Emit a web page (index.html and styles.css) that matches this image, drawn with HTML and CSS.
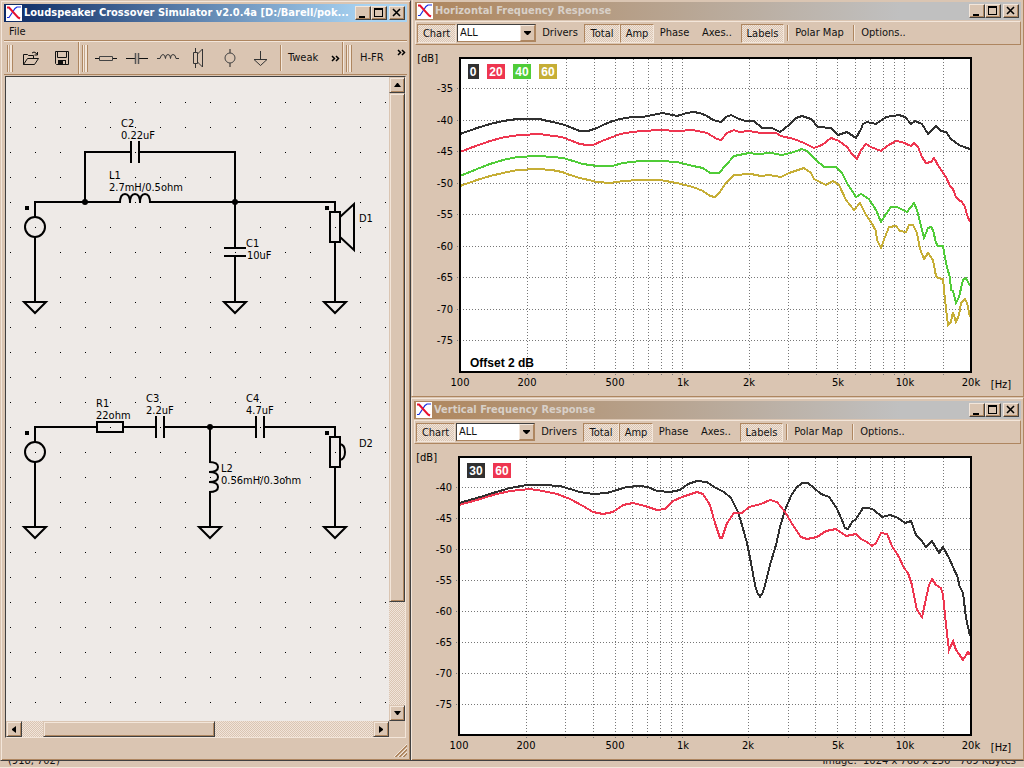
FILE: index.html
```html
<!doctype html>
<html lang="en">
<head>
    <meta charset="UTF-8">
    <title>Loudspeaker Crossover Simulator</title>
    <link rel="stylesheet" href="styles.css">
</head>
<body>
<!-- shared icons -->
<svg class="defs" width="0" height="0">
    <symbol id="logo" viewBox="0 0 16 16">
        <rect width="16" height="16" fill="#fff"/>
        <path d="M1 12.500H3L9 3.500L11 2H15" fill="none" stroke="#1a2fe0" stroke-width="1.200"/>
        <path d="M1 2.500H3L12 12.500L14 13.500" fill="none" stroke="#e8102e" stroke-width="2"/>
    </symbol>
    <symbol id="min" viewBox="0 0 12 10"><path d="M3 8h6v2H3z"/></symbol>
    <symbol id="max" viewBox="0 0 12 10"><path d="M2 0h9v9H2zM3 2v6h7V2z" fill-rule="evenodd"/></symbol>
    <symbol id="close" viewBox="0 0 12 10"><path d="M3 1l7 7M10 1L3 8" stroke="#000" stroke-width="1.600"/></symbol>
    <symbol id="more" viewBox="0 0 9 7"><path d="M1 1l2.500 2.500L1 6M5 1l2.500 2.500L5 6" fill="none" stroke="#000" stroke-width="1.500"/></symbol>
</svg>

<main class="desktop">
    <section class="window main-window">
        <header class="titlebar active">
            <svg class="logo"><use href="#logo"/></svg>
            <h1>Loudspeaker Crossover Simulator v2.0.4a [D:/Barell/pok...</h1>
            <button class="cap" aria-label="Minimize"><svg><use href="#min"/></svg></button>
            <button class="cap" aria-label="Maximize"><svg><use href="#max"/></svg></button>
            <button class="cap close" aria-label="Close"><svg><use href="#close"/></svg></button>
        </header>
        <nav class="menu"><button>File</button></nav>
        <div class="parts">
            <div class="group files">
                <i class="handle"></i>
                <button class="icon" aria-label="Open">
                    <svg viewBox="0 0 16 14"><path d="M.5 13.500V3.500h4l1 1h5v3M.5 13.500l4-6h11l-4 6zM9 2q2-2 4 0l1 1.500M14.500 1v3h-3" fill="none" stroke="#111"/></svg>
                </button>
                <button class="icon" aria-label="Save">
                    <svg viewBox="0 0 16 14"><path d="M1.500.5h13v13h-12l-1-1zM3.500.5v6h9v-6" fill="none" stroke="#111"/><path d="M4 9h8v5H4z" fill="#111"/><path d="M9 10h2v3H9z" fill="#dac5b2"/></svg>
                </button>
            </div>
            <div class="group symbols">
                <i class="handle"></i>
                <button class="icon" aria-label="Resistor">
                    <svg viewBox="0 0 22 20"><path d="M0 10.500h5M18 10.500h4" stroke="#111"/><path d="M4.500 8.500h13v4h-13z" fill="none" stroke="#444"/></svg>
                </button>
                <button class="icon" aria-label="Capacitor">
                    <svg viewBox="0 0 22 20"><path d="M0 10.500h9M13 10.500h9" stroke="#111"/><path d="M9.500 5v11M12.500 5v11" stroke="#555" stroke-width="1.500"/></svg>
                </button>
                <button class="icon" aria-label="Inductor">
                    <svg viewBox="0 0 22 20"><path d="M0 10.500h3q1-4 3-4t2.500 4q0-4 2.500-4t2.500 4q0-4 2.500-4t3 4h3" fill="none" stroke="#333"/></svg>
                </button>
                <button class="icon" aria-label="Driver">
                    <svg viewBox="0 0 22 20"><path d="M7.500 0v4M7.500 16v4M5.500 4.500h4v11h-4zM9.500 6l5-5v18l-5-5" fill="none" stroke="#333"/></svg>
                </button>
                <button class="icon" aria-label="Source">
                    <svg viewBox="0 0 22 20"><path d="M11 1v4M11 15v4" stroke="#222"/><circle cx="11" cy="10" r="5" fill="none" stroke="#444"/></svg>
                </button>
                <button class="icon" aria-label="Ground">
                    <svg viewBox="0 0 22 20"><path d="M10.500 3v9M4 11.500h13l-6.500 6-6.500-6" fill="none" stroke="#333"/></svg>
                </button>
                <i class="sep"></i>
                <button class="word">Tweak</button>
                <svg class="more"><use href="#more"/></svg>
            </div>
            <div class="group last">
                <i class="handle"></i>
                <button class="word">H-FR</button>
                <svg class="more up"><use href="#more"/></svg>
            </div>
        </div>

        <div class="sheet">
            <svg class="schematic" viewBox="6 77 383 645" preserveAspectRatio="xMinYMin slice">
                <defs>
                    <pattern id="dots" x="10" y="77" width="25" height="25" patternUnits="userSpaceOnUse">
                        <rect width="1" height="1"/>
                    </pattern>
                    <path id="gnd" d="M-11 0h22L0 11z"/>
                    <path id="vcap" d="M-4-11v22M4-11v22"/>
                </defs>
                <rect x="6" y="80" width="100%" height="100%" fill="url(#dots)"/>

                <g class="wire">
                    <!-- woofer section -->
                    <path d="M35 217v-15h85M150 202h185v10M85 202v-50h46M139 152h96v96M235 256v46M35 237v65M335 242v60"/>
                    <path d="M120 203q0-9 5-9t5 9q0-9 5-9t5 9q0-9 5-9t5 9"/>
                    <path d="M224 248h22M224 256h22"/>
                    <circle cx="35" cy="227" r="10"/>
                    <path d="M330 212h10v30h-10zM340 217l14-13v46l-14-13"/>
                    <use href="#vcap" x="135" y="152"/>
                    <use href="#gnd" x="35" y="302"/>
                    <use href="#gnd" x="235" y="302"/>
                    <use href="#gnd" x="335" y="302"/>
                    <!-- tweeter section -->
                    <path d="M35 442v-15h62M123 427h33M164 427h92M264 427h71v10M210 427v35M210 492v35M35 462v65M335 467v60"/>
                    <path d="M97 422h26v10H97z"/>
                    <path d="M209 462q9 0 9 5t-9 5q9 0 9 5t-9 5q9 0 9 5t-9 5"/>
                    <circle cx="35" cy="452" r="10"/>
                    <path d="M330 437h10v30h-10zM340 444q5 1 5 8t-5 8"/>
                    <use href="#vcap" x="160" y="427"/>
                    <use href="#vcap" x="260" y="427"/>
                    <use href="#gnd" x="35" y="527"/>
                    <use href="#gnd" x="210" y="527"/>
                    <use href="#gnd" x="335" y="527"/>
                </g>
                <circle cx="85" cy="202" r="3"/>
                <circle cx="235" cy="202" r="3"/>
                <circle cx="210" cy="427" r="3"/>
                <path d="M25 206h4v4h-4zM325 206h4v4h-4zM25 431h4v4h-4zM325 431h4v4h-4z"/>
                <g class="label">
                    <text x="121" y="127">C2</text><text x="121" y="139">0.22uF</text>
                    <text x="109" y="179">L1</text><text x="109" y="191">2.7mH/0.5ohm</text>
                    <text x="246" y="247">C1</text><text x="247" y="259">10uF</text>
                    <text x="359" y="222">D1</text>
                    <text x="96" y="407">R1</text><text x="96" y="419">22ohm</text>
                    <text x="146" y="402">C3</text><text x="146" y="414">2.2uF</text>
                    <text x="246" y="402">C4</text><text x="246" y="414">4.7uF</text>
                    <text x="221" y="472">L2</text><text x="221" y="484">0.56mH/0.3ohm</text>
                    <text x="359" y="447">D2</text>
                </g>
            </svg>
            <div class="vbar">
                <button aria-label="Scroll up"><svg viewBox="0 0 7 4"><path d="M3 0h1l3 4H0z"/></svg></button>
                <div class="thumb"></div>
                <div class="track"></div>
                <button aria-label="Scroll down"><svg viewBox="0 0 7 4"><path d="M0 0h7L4 4H3z"/></svg></button>
            </div>
            <div class="hbar">
                <button aria-label="Scroll left"><svg viewBox="0 0 4 7"><path d="M4 0v7L0 4V3z"/></svg></button>
                <div class="gap"></div>
                <div class="thumb"></div>
                <div class="track"></div>
                <button aria-label="Scroll right"><svg viewBox="0 0 4 7"><path d="M0 0v7l4-3V3z"/></svg></button>
            </div>
        </div>
        <div class="grip">
            <svg viewBox="0 0 13 13"><path d="M0 13L13 0M4 13l9-9M8 13l5-5" stroke="#f3e6da"/><path d="M1 13L13 1M2 13L13 2M5 13l8-8M6 13l7-7M9 13l4-4M10 13l3-3" stroke="#ae8660"/></svg>
        </div>
    </section>

    <div class="charts">
        <section class="window first">
            <header class="titlebar">
                <svg class="logo"><use href="#logo"/></svg>
                <h2>Horizontal Frequency Response</h2>
                <button class="cap" aria-label="Minimize"><svg><use href="#min"/></svg></button>
                <button class="cap" aria-label="Maximize"><svg><use href="#max"/></svg></button>
                <button class="cap close" aria-label="Close"><svg><use href="#close"/></svg></button>
            </header>
            <div class="tools">
                <button class="on chart">Chart</button>
                <span class="combo">
                    <select aria-label="Curves"><option>ALL</option></select>
                    <svg viewBox="0 0 13 14"><path d="M3 5h7v1L7 9H6L3 6z"/></svg>
                </span>
                <button class="drivers">Drivers</button>
                <button class="on total">Total</button>
                <button class="on amp">Amp</button>
                <button class="phase">Phase</button>
                <button class="axes">Axes..</button>
                <button class="on labels">Labels</button>
                <i class="sep"></i>
                <button class="polar">Polar Map</button>
                <i class="sep"></i>
                <button class="options">Options..</button>
            </div>
            <svg class="plot" viewBox="415 45 606 349">
                <rect x="460" y="57" width="511" height="315" fill="#fff"/>
                <path class="grid" d="M527.500 59v316M566.500 59v316M594.500 59v316M615.500 59v316M633.500 59v316M648.500 59v316M661.500 59v316M672.500 59v316M682.500 59v316M749.500 59v316M788.500 59v316M816.500 59v316M837.500 59v316M855.500 59v316M870.500 59v316M883.500 59v316M894.500 59v316M904.500 59v316M943.500 59v316"/>
                <path class="grid" d="M457 88.500h513M457 120.500h513M457 151.500h513M457 183.500h513M457 214.500h513M457 246.500h513M457 277.500h513M457 309.500h513M457 340.500h513"/>
                <polyline class="curve gold" points="460,186 477,180 490,176 503,173 517,170 538,169 552,170 562,172 570,175 580,178 597,182 610,183 623,181 640,180 660,180 677,183 693,187 703,191 710,196 715,197 719,193 726,183 734,175 751,174 761,176 769,175 781,177 789,173 804,168 811,173 814,179 826,185 833,181 839,185 846,200 854,210 860,203 866,215 871,222 876,231 877,240 881,248 885,237 889,227 896,226 900,231 906,232 909,225 913,225 917,233 920,249 924,259 928,253 933,260 936,276 938,278 943,279 945,300 948,325 951,322 953,312 956,322 959,315 961,303 965,299 967,303 970,317"/>
                <polyline class="curve green" points="460,176 477,169 490,164 503,160 517,157 538,156 553,157 563,158 573,161 583,164 597,166 612,166 623,163 640,161 660,161 677,162 693,166 703,168 710,173 719,173 726,165 734,156 749,153 757,154 771,153 782,155 794,152 802,149 807,151 816,160 824,167 836,167 842,173 847,183 856,197 861,194 869,199 876,210 881,222 886,214 891,207 897,207 907,212 914,203 917,210 920,222 924,238 928,228 931,227 933,230 936,243 938,246 943,246 946,263 950,278 951,290 953,291 956,303 959,297 963,280 966,278 970,286"/>
                <polyline class="curve red" points="460,152 473,147 490,141 505,137 520,135 540,134 553,136 562,137 572,141 580,144 587,145 593,145 602,141 610,138 620,134 632,132 643,131 660,130 677,131 693,130 707,133 717,139 721,140 727,133 734,130 739,132 749,131 761,133 776,133 781,136 794,139 804,143 814,148 822,145 831,138 839,141 847,147 852,154 857,159 861,150 866,144 871,147 881,151 887,146 896,141 902,142 911,146 914,143 918,147 922,157 926,163 931,162 934,158 939,167 946,177 950,186 953,189 956,197 959,200 962,202 965,207 967,215 970,222"/>
                <polyline class="curve black" points="460,134 477,128 490,124 503,121 517,119 540,119 543,120 553,122 565,125 572,128 580,131 588,131 597,128 603,125 610,122 620,119 632,117 643,117 652,115 663,113 677,116 687,113 693,112 700,113 707,116 713,120 721,122 726,117 731,115 739,119 746,121 754,121 762,128 772,128 780,132 789,125 796,118 802,116 811,119 818,127 831,128 838,135 847,132 856,138 861,129 863,124 867,122 876,124 886,117 899,115 905,117 911,124 915,121 922,124 928,134 936,126 941,131 946,132 951,139 959,145 964,147 970,149"/>
                <rect class="frame" x="460" y="58" width="511" height="314"/>
                <g class="badge">
                    <rect class="black" x="468" y="64" width="11" height="15"/><text x="473" y="76">0</text>
                    <rect class="red" x="487" y="64" width="18" height="15"/><text x="496" y="76">20</text>
                    <rect class="green" x="513" y="64" width="18" height="15"/><text x="522" y="76">40</text>
                    <rect class="gold" x="539" y="64" width="18" height="15"/><text x="548" y="76">60</text>
                </g>
                <text class="note" x="470" y="367">Offset 2 dB</text>
                <g class="ylab">
                    <text x="438" y="62">[dB]</text>
                    <text x="453" y="92">-35</text><text x="453" y="124">-40</text>
                    <text x="453" y="155">-45</text><text x="453" y="187">-50</text>
                    <text x="453" y="218">-55</text><text x="453" y="250">-60</text>
                    <text x="453" y="281">-65</text><text x="453" y="313">-70</text>
                    <text x="453" y="344">-75</text>
                </g>
                <g class="xlab">
                    <text x="460" y="386">100</text><text x="527" y="386">200</text>
                    <text x="615" y="386">500</text><text x="683" y="386">1k</text>
                    <text x="749" y="386">2k</text><text x="838" y="386">5k</text>
                    <text x="905" y="386">10k</text><text x="971" y="386">20k</text>
                    <text x="1001" y="388">[Hz]</text>
                </g>
            </svg>
        </section>

        <section class="window second">
            <header class="titlebar">
                <svg class="logo"><use href="#logo"/></svg>
                <h2>Vertical Frequency Response</h2>
                <button class="cap" aria-label="Minimize"><svg><use href="#min"/></svg></button>
                <button class="cap" aria-label="Maximize"><svg><use href="#max"/></svg></button>
                <button class="cap close" aria-label="Close"><svg><use href="#close"/></svg></button>
            </header>
            <div class="tools">
                <button class="on chart">Chart</button>
                <span class="combo">
                    <select aria-label="Curves"><option>ALL</option></select>
                    <svg viewBox="0 0 13 14"><path d="M3 5h7v1L7 9H6L3 6z"/></svg>
                </span>
                <button class="drivers">Drivers</button>
                <button class="on total">Total</button>
                <button class="on amp">Amp</button>
                <button class="phase">Phase</button>
                <button class="axes">Axes..</button>
                <button class="on labels">Labels</button>
                <i class="sep"></i>
                <button class="polar">Polar Map</button>
                <i class="sep"></i>
                <button class="options">Options..</button>
            </div>
            <svg class="plot" viewBox="414 444 607 313">
                <rect x="459" y="456" width="512" height="279" fill="#fff"/>
                <path class="grid" d="M526.500 458v281M565.500 458v281M593.500 458v281M615.500 458v281M632.500 458v281M647.500 458v281M660.500 458v281M671.500 458v281M682.500 458v281M748.500 458v281M788.500 458v281M815.500 458v281M837.500 458v281M855.500 458v281M870.500 458v281M882.500 458v281M894.500 458v281M904.500 458v281M943.500 458v281"/>
                <path class="grid" d="M456 487.500h514M456 518.500h514M456 549.500h514M456 580.500h514M456 611.500h514M456 642.500h514M456 673.500h514M456 704.500h514"/>
                <polyline class="curve black" points="459,503 477,498 493,493 510,488 527,485 543,485 560,486 570,489 580,492 593,494 607,493 617,490 627,487 640,486 648,487 657,491 670,492 680,490 688,484 697,481 707,482 714,487 724,492 731,498 738,512 742,525 747,543 751,563 755,585 757,592 760,597 763,592 765,585 770,565 776,545 780,527 785,510 791,496 796,488 802,483 808,483 814,488 821,494 829,497 836,507 842,520 845,528 848,529 852,522 856,519 863,508 869,508 874,510 882,517 890,515 898,518 905,523 911,521 916,535 921,540 926,547 932,541 939,553 943,547 949,558 953,567 958,578 959,585 963,593 966,618 970,636"/>
                <polyline class="curve red" points="459,505 477,500 493,495 510,491 530,489 543,491 557,494 570,499 583,506 593,512 603,514 613,512 623,505 633,503 645,506 657,510 665,509 673,501 682,497 697,492 703,494 710,505 715,523 720,538 722,538 727,523 734,513 742,513 749,507 761,504 770,500 777,502 785,512 794,527 801,537 807,539 817,537 826,531 836,529 846,536 856,534 861,539 867,542 872,546 876,543 881,533 887,534 892,546 899,557 904,568 908,573 912,585 917,610 922,617 929,585 932,579 936,585 941,588 943,595 946,625 949,650 953,641 956,650 959,654 963,660 968,652 970,655"/>
                <rect class="frame" x="459" y="457" width="512" height="278"/>
                <g class="badge">
                    <rect class="black" x="467" y="463" width="18" height="15"/><text x="476" y="475">30</text>
                    <rect class="red" x="493" y="463" width="18" height="15"/><text x="502" y="475">60</text>
                </g>
                <g class="ylab">
                    <text x="437" y="461">[dB]</text>
                    <text x="452" y="491">-40</text><text x="452" y="522">-45</text>
                    <text x="452" y="553">-50</text><text x="452" y="584">-55</text>
                    <text x="452" y="615">-60</text><text x="452" y="646">-65</text>
                    <text x="452" y="677">-70</text><text x="452" y="708">-75</text>
                </g>
                <g class="xlab">
                    <text x="459" y="749">100</text><text x="526" y="749">200</text>
                    <text x="615" y="749">500</text><text x="683" y="749">1k</text>
                    <text x="748" y="749">2k</text><text x="838" y="749">5k</text>
                    <text x="905" y="749">10k</text><text x="971" y="749">20k</text>
                    <text x="1001" y="751">[Hz]</text>
                </g>
            </svg>
        </section>
    </div>
</main>

<footer class="statusbar">
    <span>(918, 702)</span>
    <span class="info">Image:  1024 x 768 x 256   769 KBytes</span>
</footer>
</body>
</html>
```
FILE: styles.css
```css
*{
    box-sizing: border-box;
}
html, body{
    height: 100%;
}
body{
    margin: 0;
    display: flex;
    flex-direction: column;
    background: #dac5b2;
    color: #111;
    font: 11px/14px "DejaVu Sans Condensed", "Noto Sans", sans-serif;
    overflow: hidden;
}
button, select{
    font: inherit;
    color: inherit;
    margin: 0;
    padding: 0;
    border: 0;
    border-radius: 0;
    background: none;
}
.defs{
    position: absolute;
}
.desktop{
    display: grid;
    grid-template-columns: minmax(0, 411fr) minmax(0, 613fr);
}
.charts{
    display: flex;
    flex-direction: column;
}

/* windows */
.window{
    display: flex;
    flex-direction: column;
    padding: 3px;
    border: 1px solid #dac5b2;
    background: #dac5b2;
}
.main-window{
    border-color: #dac5b2 #404040 #404040 #dac5b2;
    box-shadow: inset 1px 1px #f3e6da, inset -1px -1px #ae8660;
}
.first{
    padding: 2px 2px 2px 3px;
    border-width: 0 1px 1px;
    border-color: #ae8660 #ae8660 #ae8660 #dac5b2;
    box-shadow: inset 1px 0 #f3e6da;
}
.second{
    padding: 3px 2px 3px 3px;
    border-width: 1px 1px 1px 0;
    border-color: #dac5b2 #ae8660 #404040;
    box-shadow: inset 1px 1px #f3e6da, inset 0 -1px #ae8660;
}
.titlebar{
    display: flex;
    align-items: center;
    height: 18px;
    padding: 0 2px;
    color: #d8d0c8;
    background: linear-gradient(90deg, #ae855c, #c0c0c0 80%);
}
.titlebar.active{
    color: #fff;
    background: linear-gradient(90deg, #0c2a63, #a8d3f2 90%);
}
.titlebar h1, .titlebar h2{
    flex: 1;
    min-width: 0;
    margin: 0 2px;
    font: bold 11px/16px "DejaVu Sans Condensed", "Noto Sans", sans-serif;
    white-space: nowrap;
    overflow: hidden;
}
.logo{
    width: 16px;
    height: 16px;
    flex: none;
}
.cap{
    flex: none;
    width: 16px;
    height: 14px;
    border: 1px solid;
    border-color: #f3e6da #404040 #404040 #f3e6da;
    box-shadow: inset -1px -1px #ae8660;
    background: #dac5b2;
}
.cap svg{
    display: block;
    width: 12px;
    height: 10px;
}
.close{
    margin-left: 2px;
}

/* main window */
.menu{
    height: 19px;
    padding: 3px 5px;
    border-bottom: 1px solid #ae8660;
}
.menu button{
    display: block;
}
.parts{
    display: flex;
    height: 34px;
    border-top: 1px solid #f3e6da;
    border-bottom: 1px solid #ae8660;
}
.group{
    display: flex;
    align-items: center;
    padding: 0 1px 0 2px;
    border-right: 1px solid #ae8660;
    box-shadow: 1px 0 #f3e6da;
    margin-right: 1px;
}
.files{
    padding-left: 3px;
}
.symbols{
    width: 263px;
}
.last{
    flex: 1;
    border: 0;
    margin: 0;
    box-shadow: none;
}
.handle{
    width: 6px;
    height: 27px;
    margin-right: 2px;
    border: solid #ae8660;
    border-width: 0 1px;
    background: linear-gradient(90deg, #f3e6da 1px, #dac5b2 1px, #ae8660 2px, #f3e6da 2px);
}
.icon{
    width: 31px;
    height: 28px;
}
.icon svg{
    display: block;
    width: 22px;
    height: 20px;
    margin: auto;
}
.files .icon svg{
    width: 16px;
    height: 14px;
}
.sep{
    width: 2px;
    height: 26px;
    border-left: 1px solid #ae8660;
    border-right: 1px solid #f3e6da;
}
.parts .sep{
    margin: 0 6px 0 4px;
}
.word{
    white-space: nowrap;
}
.last .word{
    margin-left: 6px;
}
.more{
    width: 9px;
    height: 7px;
    margin-left: auto;
}
.symbols .more{
    margin-right: 1px;
}
.more.up{
    align-self: flex-start;
    margin-top: 7px;
}
.sheet{
    flex: 1;
    min-height: 0;
    display: grid;
    grid-template: minmax(0, 1fr) 16px / minmax(0, 1fr) 16px;
    border: 1px solid;
    border-color: #404040 #f3e6da #f3e6da #404040;
    margin: 1px 1px 0;
}
.schematic{
    width: 100%;
    height: 100%;
    background: #eeeae7;
    contain: size;
}
.wire{
    fill: none;
    stroke: #000;
    stroke-width: 2;
}
.label{
    font-size: 11px;
}
.vbar, .hbar{
    display: flex;
}
.vbar{
    flex-direction: column;
}
.track, .gap, .on{
    background: conic-gradient(#f0e4da 25%, #dac5b2 0 50%, #f0e4da 0 75%, #dac5b2 0) 0 0 / 2px 2px;
}
.vbar button, .hbar button, .thumb{
    flex: none;
    width: 16px;
    height: 16px;
    border: 1px solid;
    border-color: #dac5b2 #404040 #404040 #dac5b2;
    box-shadow: inset 1px 1px #f3e6da, inset -1px -1px #ae8660;
    background: #dac5b2;
}
.vbar button svg, .hbar button svg{
    display: block;
    margin: auto;
}
.vbar button svg{
    width: 7px;
    height: 4px;
}
.hbar button svg{
    width: 4px;
    height: 7px;
}
.vbar .thumb{
    height: 79%;
}
.hbar .thumb{
    width: 45%;
}
.gap{
    width: 21px;
}
.track{
    flex: 1;
}
.grip{
    display: flex;
    justify-content: flex-end;
    align-items: flex-end;
    height: 19px;
}
.grip svg{
    width: 13px;
    height: 13px;
}

/* chart windows */
.tools{
    display: flex;
    align-items: center;
    height: 24px;
    margin-top: 1px;
    padding-left: 1px;
    border: 1px solid;
    border-color: #f3e6da #ae8660 #ae8660 #f3e6da;
}
.tools button{
    flex: none;
    height: 19px;
    white-space: nowrap;
}
.tools .on{
    padding-top: 1px;
    border: 1px solid;
    border-color: #ae8660 #f3e6da #f3e6da #ae8660;
}
.tools .chart{
    width: 39px;
    margin-right: 1px;
}
.combo{
    position: relative;
    width: 79px;
    height: 18px;
    flex: none;
}
.combo select{
    appearance: none;
    width: 100%;
    height: 100%;
    padding: 0 2px;
    background: #fff;
    border: 1px solid;
    border-color: #404040 #ae8660 #ae8660 #404040;
}
.combo svg{
    position: absolute;
    right: 1px;
    top: 1px;
    width: 15px;
    height: 16px;
    border: 1px solid;
    border-color: #f3e6da #ae8660 #ae8660 #f3e6da;
    background: #dac5b2;
    pointer-events: none;
}
.tools .drivers{
    width: 48px;
}
.tools .total{
    width: 36px;
}
.tools .amp{
    width: 34px;
}
.tools .phase{
    width: 41px;
}
.tools .axes{
    width: 44px;
}
.tools .labels{
    width: 43px;
    margin-left: 2px;
}
.tools .sep{
    height: 16px;
    margin-left: 3px;
}
.tools .polar{
    width: 61px;
}
.tools .options{
    width: 57px;
}
.plot{
    display: block;
    width: 100%;
    height: auto;
}
.grid{
    stroke: #777;
    stroke-dasharray: 1 2;
}
.curve{
    fill: none;
    stroke-width: 2;
    shape-rendering: crispEdges;
}
.curve.black{
    stroke: #303030;
}
.curve.red{
    stroke: #ee3650;
}
.curve.green{
    stroke: #50cc38;
}
.curve.gold{
    stroke: #c6ae36;
}
rect.black{
    fill: #303030;
}
rect.red{
    fill: #ee3650;
}
rect.green{
    fill: #50cc38;
}
rect.gold{
    fill: #c6ae36;
}
.frame{
    fill: none;
    stroke: #000;
    stroke-width: 2;
}
.badge, .note{
    font: bold 12px "Liberation Sans", sans-serif;
}
.badge text{
    fill: #fff;
    text-anchor: middle;
}
.ylab{
    text-anchor: end;
}
.xlab{
    text-anchor: middle;
}

/* status line behind the windows */
.statusbar{
    display: flex;
    justify-content: space-between;
    align-items: flex-end;
    height: 7px;
    padding: 0 8px;
    border-bottom: 1px solid #f3e6da;
    line-height: 12px;
    white-space: pre;
    overflow: hidden;
}
```
